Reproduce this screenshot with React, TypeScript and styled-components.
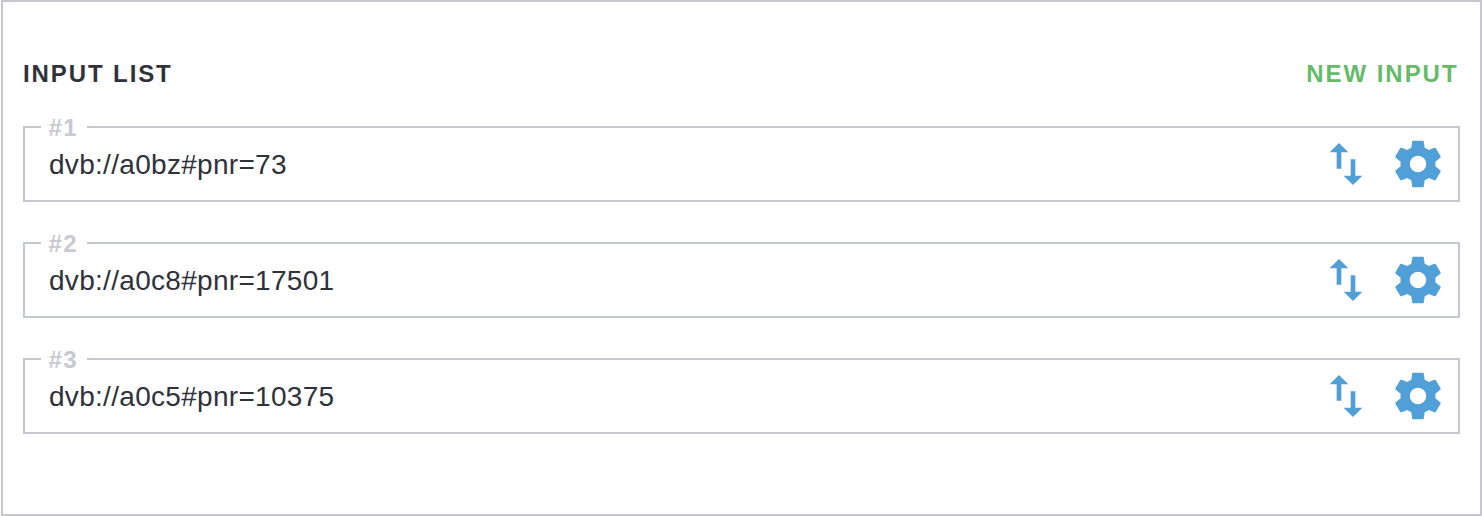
import React from "react";
import styled, { createGlobalStyle } from "styled-components";

const line = "#c5c9cf";
const ink = "#2f323a";

const GlobalStyle = createGlobalStyle`
  *, *::before, *::after { box-sizing: border-box; }
  body {
    margin: 0;
    background: #fff;
    font-family: "Liberation Sans", Helvetica, Arial, sans-serif;
  }
`;

const Panel = styled.section`
  height: 516px;
  margin-left: 1px;
  padding: 56px 20px 0;
  border: 2px solid ${line};
  background: #fff;
`;

const Header = styled.header`
  display: flex;
  justify-content: space-between;
  align-items: center;
  height: 32px;
  margin-bottom: 36px;
`;

const Title = styled.h2`
  margin: 0;
  color: ${ink};
  font-size: 24px;
  font-weight: 700;
  line-height: 32px;
  letter-spacing: 1.9px;
`;

const NewInput = styled.button`
  margin-right: 1.5px;
  padding: 0;
  border: 0;
  background: none;
  color: #66bb6a;
  font: 700 24px/32px "Liberation Sans", Helvetica, Arial, sans-serif;
  letter-spacing: 1.95px;
  cursor: pointer;
`;

const List = styled.div`
  display: flex;
  flex-direction: column;
  gap: 40px;
`;

const Field = styled.div`
  position: relative;
  display: flex;
  align-items: center;
  height: 76px;
  padding: 0 12px 0 24px;
  border: 2px solid ${line};
`;

const Label = styled.span`
  position: absolute;
  top: -14px;
  left: 16px;
  width: 46px;
  padding-left: 7.5px;
  background: #fff;
  color: #c7cad1;
  font-size: 24px;
  font-weight: 700;
  line-height: 28px;
  letter-spacing: 1.5px;
`;

const Value = styled.span`
  flex: 1;
  padding-top: 2px;
  color: ${ink};
  font-size: 28px;
  line-height: 36px;
  letter-spacing: 0.3px;
`;

const Actions = styled.div`
  display: flex;
  gap: 16px;
`;

const IconButton = styled.button`
  display: flex;
  padding: 0;
  border: 0;
  background: none;
  color: #519fd7;
  cursor: pointer;
`;

const Icon = styled.svg`
  display: block;
  width: 56px;
  height: 56px;
  fill: currentColor;
`;

const SWAP =
  "M16 17.01V10h-2v7.01h-3L15 21l4-3.99h-3zM9 3L5 6.99h3V14h2V6.99h3L9 3z";
const GEAR =
  "M19.43 12.98c.04-.32.07-.64.07-.98s-.03-.66-.07-.98l2.11-1.65c.19-.15.24-.42.12-.64l-2-3.46c-.12-.22-.39-.3-.61-.22l-2.49 1c-.52-.4-1.08-.73-1.69-.98l-.38-2.65C14.46 2.18 14.25 2 14 2h-4c-.25 0-.46.18-.49.42l-.38 2.65c-.61.25-1.17.59-1.69.98l-2.49-1c-.23-.09-.49 0-.61.22l-2 3.46c-.13.22-.07.49.12.64l2.11 1.65c-.04.32-.07.65-.07.98s.03.66.07.98l-2.11 1.65c-.19.15-.24.42-.12.64l2 3.46c.12.22.39.3.61.22l2.49-1c.52.4 1.08.73 1.69.98l.38 2.65c.03.24.24.42.49.42h4c.25 0 .46-.18.49-.42l.38-2.65c.61-.25 1.17-.59 1.69-.98l2.49 1c.23.09.49 0 .61-.22l2-3.46c.12-.22.07-.49-.12-.64l-2.11-1.65zM12 15.5c-1.93 0-3.5-1.57-3.5-3.5s1.57-3.5 3.5-3.5 3.5 1.57 3.5 3.5-1.57 3.5-3.5 3.5z";

const inputs = ["dvb://a0bz#pnr=73", "dvb://a0c8#pnr=17501", "dvb://a0c5#pnr=10375"];

export default function App() {
  return (
    <>
      <GlobalStyle />
      <Panel>
        <Header>
          <Title>INPUT LIST</Title>
          <NewInput>NEW INPUT</NewInput>
        </Header>
        <List>
          {inputs.map((url, i) => (
            <Field key={url}>
              <Label>#{i + 1}</Label>
              <Value>{url}</Value>
              <Actions>
                <IconButton>
                  <Icon viewBox="0 0 24 24"><path d={SWAP} /></Icon>
                </IconButton>
                <IconButton>
                  <Icon viewBox="0 0 24 24"><path d={GEAR} /></Icon>
                </IconButton>
              </Actions>
            </Field>
          ))}
        </List>
      </Panel>
    </>
  );
}
